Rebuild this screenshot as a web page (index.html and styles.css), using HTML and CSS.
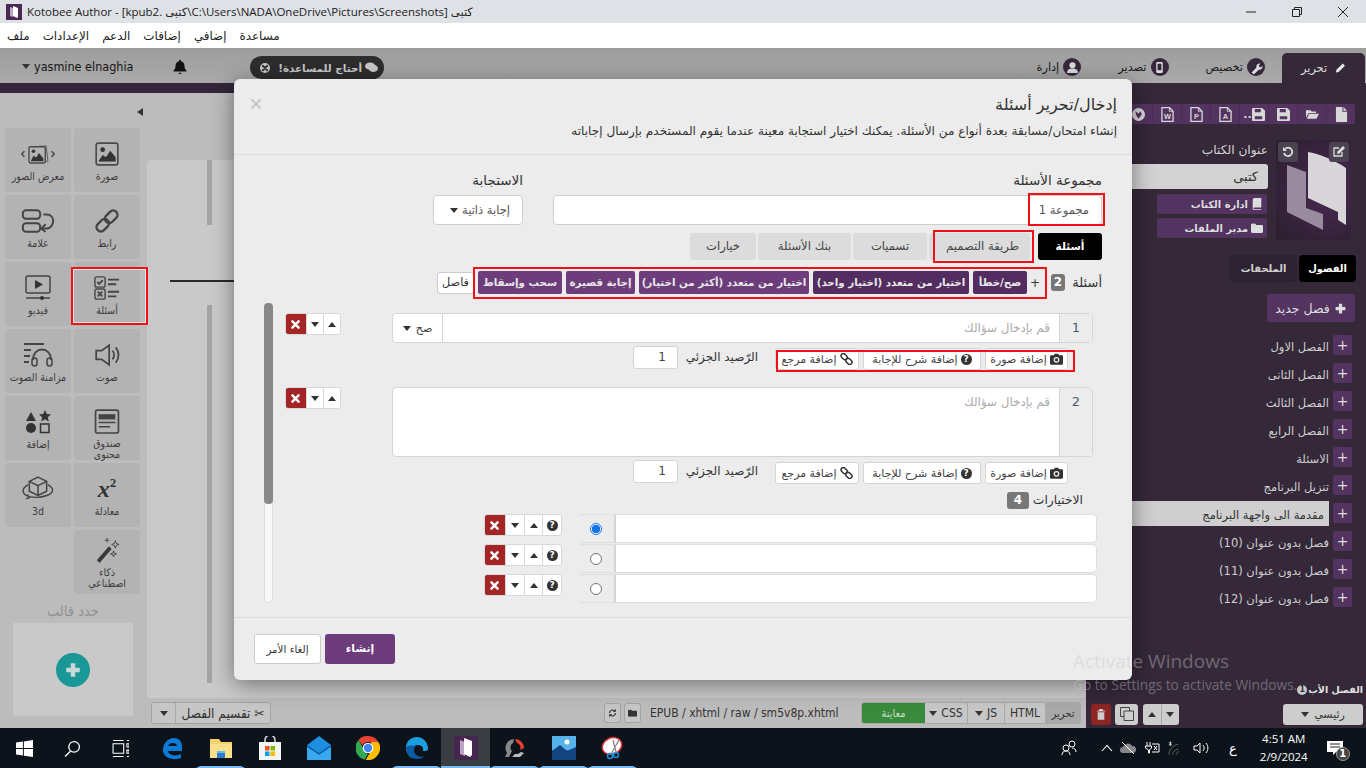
FILE: index.html
```html
<!DOCTYPE html>
<html lang="ar">
<head>
    <meta charset="UTF-8">
    <title>Kotobee Author</title>
    <link rel="stylesheet" href="styles.css">
</head>
<body>

<svg class="defs" width="0" height="0">
    <symbol id="i-x" viewBox="0 0 16 16"><path d="M3.500 3.500l9 9M12.500 3.500l-9 9" stroke="currentColor" stroke-width="3.600" fill="none" stroke-linecap="round"/></symbol>
    <symbol id="i-down" viewBox="0 0 10 6"><path d="M0 0h10L5 6z" fill="currentColor"/></symbol>
    <symbol id="i-up" viewBox="0 0 10 6"><path d="M0 6h10L5 0z" fill="currentColor"/></symbol>
    <symbol id="i-cam" viewBox="0 0 16 14"><path d="M1.500 2.500h3.200L6 .5h4l1.300 2h3.200A1.500 1.500 0 0 1 16 4v8.500a1.500 1.500 0 0 1-1.500 1.500h-13A1.500 1.500 0 0 1 0 12.500V4a1.500 1.500 0 0 1 1.500-1.500z" fill="currentColor"/><circle cx="8" cy="8" r="3.600" fill="#ececec"/><circle cx="8" cy="8" r="2" fill="currentColor"/></symbol>
    <symbol id="i-link" viewBox="0 0 16 16"><g transform="rotate(45 8 8)" fill="none" stroke="currentColor" stroke-width="2"><rect x="-1" y="5" width="9" height="6" rx="3"/><rect x="8" y="5" width="9" height="6" rx="3"/></g></symbol>
    <symbol id="i-plus" viewBox="0 0 16 16"><path d="M8 2v12M2 8h12" stroke="currentColor" stroke-width="4" fill="none"/></symbol>
    <symbol id="i-file" viewBox="0 0 14 16"><path d="M1 0h7v5h5v11H1zM9 0l4 4H9z" fill="currentColor"/></symbol>
    <symbol id="i-open" viewBox="0 0 18 14"><path d="M0 1h6l2 2h6v2H4L0 11zM4.500 6H18l-3.500 7H1z" fill="currentColor"/></symbol>
    <symbol id="i-save" viewBox="0 0 14 14"><path d="M0 1a1 1 0 0 1 1-1h10l3 3v10a1 1 0 0 1-1 1H1a1 1 0 0 1-1-1zM3 1v3.500h6.500V1zM3 9v3h8V9z" fill="currentColor" fill-rule="evenodd"/></symbol>
    <symbol id="i-doc" viewBox="0 0 14 16"><path d="M1 .5h8l4 4v11H1z" fill="none" stroke="currentColor" stroke-width="1.400"/><path d="M9 .5v4h4" fill="none" stroke="currentColor"/></symbol>
    <symbol id="i-folder" viewBox="0 0 16 13"><path d="M0 2A1.500 1.500 0 0 1 1.500.5h4L7 2.500h7.500A1.500 1.500 0 0 1 16 4v7.500a1.500 1.500 0 0 1-1.500 1.500h-13A1.500 1.500 0 0 1 0 11.500z" fill="currentColor"/></symbol>
</svg>

<div class="titlebar">
    <svg class="app-logo" viewBox="0 0 16 16"><rect width="16" height="16" fill="#4a2a55"/><path d="M4 3l3 1v9l-3-1z" fill="#b9a6c0"/><path d="M7 2l5 2v9l-1 1-4-2z" fill="#fff"/></svg>
    <span class="title-text">Kotobee Author - [kpub2. كتبى\C:\Users\NADA\OneDrive\Pictures\Screenshots] كتبى</span>
    <div class="win-btns">
        <svg viewBox="0 0 12 12"><path d="M1 6h10" stroke="#222" fill="none"/></svg>
        <svg viewBox="0 0 12 12"><path d="M1.500 3.500h7v7h-7zM3.500 3.500v-2h7v7h-2" stroke="#222" fill="none"/></svg>
        <svg viewBox="0 0 12 12"><path d="M1 1l10 10M11 1L1 11" stroke="#222" fill="none"/></svg>
    </div>
</div>

<div class="menubar">
    <span>ملف</span>
    <span>الإعدادات</span>
    <span>الدعم</span>
    <span>إضافات</span>
    <span>إضافي</span>
    <span>مساعدة</span>
</div>

<div class="topbar">
    <div class="user"><svg class="caret"><use href="#i-down"/></svg>yasmine elnaghia</div>
    <svg class="bell" viewBox="0 0 14 14"><path d="M7 0a1 1 0 0 1 1 1.200c2.500.5 3.500 2.500 3.500 5 0 2.300 1 3.500 2 4.300v1H.5v-1c1-.8 2-2 2-4.300 0-2.500 1-4.500 3.500-5A1 1 0 0 1 7 0zM5.500 12.800h3a1.500 1.200 0 0 1-3 0z" fill="#111"/></svg>
    <div class="help-chip" dir="rtl">
        <svg viewBox="0 0 14 12"><ellipse cx="5.500" cy="4.500" rx="5.500" ry="4" fill="#c9c9c9"/><ellipse cx="9" cy="7" rx="5" ry="4" fill="#c9c9c9"/></svg>
        <span>أحتاج للمساعدة!</span>
        <span class="chip-x"><svg><use href="#i-x"/></svg></span>
    </div>
    <div class="nav" dir="rtl">
        <div class="nav-tab">
            <svg viewBox="0 0 12 12"><path d="M1 11l.6-3L8.500 1.100l2.400 2.400L4 10.400z" fill="#e6e6e6"/></svg>
            <span>تحرير</span>
        </div>
        <div class="nav-item n1">
            <span class="nav-ic"><svg viewBox="0 0 12 12"><path d="M1.500 10.500L6 6c-.6-2 1-4 3.600-3.500L8 4.200l.6 1.200 1.200.6 1.700-1.600C12 7 10 8.500 8 8l-4.500 4.500z" fill="#ddd"/></svg></span>
            <span>تخصيص</span>
        </div>
        <div class="nav-item n2">
            <span class="nav-ic"><svg viewBox="0 0 12 12"><rect x="3" y="1" width="6" height="10" rx="1" fill="#ddd"/><rect x="4.200" y="2.500" width="3.600" height="6" fill="#35283a"/></svg></span>
            <span>تصدير</span>
        </div>
        <div class="nav-item n3">
            <span class="nav-ic"><svg viewBox="0 0 12 12"><circle cx="6" cy="4" r="2.800" fill="#ddd"/><path d="M1 11c0-3 2-4 5-4s5 1 5 4z" fill="#ddd"/></svg></span>
            <span>إدارة</span>
        </div>
    </div>
</div>

<div class="main">
    <div class="workspace">
        <aside class="sidebar" dir="rtl">
            <svg class="collapse" viewBox="0 0 6 8"><path d="M6 0v8L0 4z" fill="#333"/></svg>
            <div class="tools">
                <div class="tool">
                    <svg viewBox="0 0 24 24"><rect x="2" y="2" width="20" height="20" rx="2" fill="none" stroke="#4a4a4a" stroke-width="1.500"/><circle cx="8" cy="8" r="2.200" fill="#333"/><path d="M4 19l4-6 3 2 4-6 5 6v4z" fill="#333"/></svg>
                    <span>صورة</span>
                </div>
                <div class="tool">
                    <svg class="wide" viewBox="0 0 42 24"><path d="M6 9l-3 3 3 3M36 9l3 3-3 3" fill="none" stroke="#444" stroke-width="1.500"/><path d="M16 4l14-1 2 17-3 .5" fill="none" stroke="#555"/><rect x="11" y="4" width="18" height="18" rx="2" fill="none" stroke="#4a4a4a" stroke-width="1.500"/><circle cx="16" cy="9" r="2" fill="#333"/><path d="M13 20l3-6 3 2 3-5 5 6v3z" fill="#333"/></svg>
                    <span>معرض الصور</span>
                </div>
                <div class="tool">
                    <svg viewBox="0 0 24 24"><g transform="rotate(-45 12 12)" fill="none" stroke="#444" stroke-width="2.200"><rect x="0" y="8" width="13" height="8" rx="4"/><rect x="11" y="8" width="13" height="8" rx="4"/></g></svg>
                    <span>رابط</span>
                </div>
                <div class="tool">
                    <svg class="wide" viewBox="0 0 30 24"><g fill="none" stroke="#444" stroke-width="1.800"><rect x="1" y="2" width="16" height="8" rx="3"/><rect x="1" y="14" width="16" height="8" rx="3"/><path d="M20 6h3c4 0 6 3 6 6s-2 7-7 7h-3"/><path d="M22 15l-4 4 4 3"/></g></svg>
                    <span>علامة</span>
                </div>
                <div class="tool">
                    <svg viewBox="0 0 28 26"><g fill="none" stroke="#444" stroke-width="1.500"><rect x="1" y="1" width="11" height="11" rx="2"/><rect x="1" y="14" width="11" height="11" rx="2"/><path d="M3.500 6.500l2 2 4-4" stroke-width="2"/><path d="M4 17l5 5M9 17l-5 5" stroke-width="1.800"/><path d="M15 4h12M15 9h9M15 17h12M15 22h9" stroke-width="2"/></g></svg>
                    <span>أسئلة</span>
                </div>
                <div class="tool">
                    <svg viewBox="0 0 26 26"><rect x="1" y="1" width="24" height="17" rx="2" fill="none" stroke="#444" stroke-width="1.500"/><path d="M10 5l8 4.500-8 4.500z" fill="#333"/><path d="M1 23h24" stroke="#444" stroke-width="1.500"/><circle cx="17" cy="23" r="2" fill="#333"/></svg>
                    <span>فيديو</span>
                </div>
                <div class="tool">
                    <svg viewBox="0 0 24 24"><path d="M2 8h5l7-5v18l-7-5H2z" fill="none" stroke="#444" stroke-width="1.600"/><path d="M17 8c2 2 2 6 0 8M20 5c3.500 4 3.500 10 0 14" fill="none" stroke="#444" stroke-width="1.600"/></svg>
                    <span>صوت</span>
                </div>
                <div class="tool">
                    <svg class="wide" viewBox="0 0 32 26"><path d="M2 2h20M2 8h7M2 14h6M2 20h5" stroke="#444" stroke-width="2" fill="none"/><path d="M11 18c0-14 18-14 18 0" fill="none" stroke="#444" stroke-width="1.800"/><rect x="10" y="16" width="5" height="8" rx="2.500" fill="none" stroke="#444" stroke-width="1.500"/><rect x="25" y="16" width="5" height="8" rx="2.500" fill="none" stroke="#444" stroke-width="1.500"/></svg>
                    <span>مزامنة الصوت</span>
                </div>
                <div class="tool">
                    <svg viewBox="0 0 24 24"><rect x="1" y="1" width="22" height="22" rx="2" fill="none" stroke="#444" stroke-width="1.600"/><rect x="4" y="5" width="16" height="5" fill="#444"/><path d="M4 13h16M4 17h11" stroke="#444" stroke-width="1.400"/></svg>
                    <span>صندوق<br>محتوى</span>
                </div>
                <div class="tool">
                    <svg viewBox="0 0 26 24"><path d="M1 11L6 2l5 9z" fill="#333"/><path d="M20 0l1.800 4 4.200.4-3.200 2.900 1 4.200-3.800-2.300-3.800 2.300 1-4.200L14 4.400l4.200-.4z" fill="#333"/><circle cx="6" cy="18" r="5" fill="#333"/><rect x="15.500" y="14" width="8.500" height="8.500" fill="none" stroke="#333" stroke-width="1.500"/></svg>
                    <span>إضافة</span>
                </div>
                <div class="tool">
                    <div class="eq" dir="ltr"><i>x</i><sup>2</sup></div>
                    <span>معادلة</span>
                </div>
                <div class="tool">
                    <svg class="wide" viewBox="0 0 30 24"><path d="M15 1l8 4v9l-8 4-8-4V5zM7 5l8 4 8-4M15 9v9" fill="none" stroke="#444" stroke-width="1.400"/><path d="M6 8c-7 4-6 9 1 11 5 1 11 1 16-1 7-2 7-7 1-10M5 17l2 3-3 1" fill="none" stroke="#444" stroke-width="1.300"/></svg>
                    <span>3d</span>
                </div>
                <div class="tool ai">
                    <svg viewBox="0 0 26 28"><path d="M2 25L15 10l3 3L5 28z" fill="#3a3a3a"/><path d="M13 1v5M10.500 3.500h5M22 4l1 3 3 1-3 1-1 3-1-3-3-1 3-1zM20 15l.8 2.400 2.400.8-2.400.8-.8 2.400-.8-2.400-2.400-.8 2.400-.8z" fill="none" stroke="#444"/></svg>
                    <span>ذكاء<br>اصطناعي</span>
                </div>
            </div>
            <div class="tpl-title">حدد قالب</div>
            <div class="tpl-box"><span class="tpl-add"><svg><use href="#i-plus"/></svg></span></div>
        </aside>

        <div class="center">
            <div class="canvas">
                <div class="bar short"></div>
                <div class="rule"></div>
                <div class="doc">
                    <div class="bar long"></div>
                    <div class="doc-text" dir="rtl">ن<br>ن</div>
                </div>
            </div>
            <div class="bottombar">
                <div class="btn-group split">
                    <span class="bb-btn"><svg class="caret"><use href="#i-down"/></svg></span>
                    <span class="bb-btn split-main" dir="rtl">✂ تقسيم الفصل</span>
                </div>
                <span class="mini-btn first"><svg viewBox="0 0 12 12"><path d="M2 6a4 4 0 0 1 7-2.600M10 6a4 4 0 0 1-7 2.600" fill="none" stroke="#333" stroke-width="1.600"/><path d="M10 1v3H7M2 11V8h3" fill="none" stroke="#333" stroke-width="1.200"/></svg></span>
                <span class="mini-btn"><svg viewBox="0 0 16 13"><use href="#i-folder"/></svg></span>
                <span class="path">EPUB / xhtml / raw / sm5v8p.xhtml</span>
                <div class="btn-group code-tabs">
                    <span class="bb-btn preview">معاينة</span>
                    <span class="bb-btn b-css"><svg class="caret"><use href="#i-down"/></svg>CSS</span>
                    <span class="bb-btn b-js"><svg class="caret"><use href="#i-down"/></svg>JS</span>
                    <span class="bb-btn b-html">HTML</span>
                    <span class="bb-btn b-edit">تحرير</span>
                </div>
            </div>
        </div>
    </div>

    <aside class="panel" dir="rtl">
        <div class="file-tools">
            <span><svg class="t-ic"><use href="#i-file"/></svg></span>
            <span><svg class="t-ic"><use href="#i-open"/></svg></span>
            <span><svg class="t-ic"><use href="#i-save"/></svg></span>
            <span class="save-as"><svg class="t-ic"><use href="#i-save"/></svg>..</span>
            <span><svg class="t-ic" viewBox="0 0 14 16"><use href="#i-doc"/><text x="7" y="13" class="doc-letter">A</text></svg></span>
            <span><svg class="t-ic" viewBox="0 0 14 16"><use href="#i-doc"/><text x="7" y="13" class="doc-letter">P</text></svg></span>
            <span><svg class="t-ic" viewBox="0 0 14 16"><use href="#i-doc"/><text x="7" y="13" class="doc-letter">W</text></svg></span>
            <span><svg viewBox="0 0 12 12" class="t-ic"><circle cx="6" cy="6" r="6" fill="#d8d8d8"/><path d="M3 3l3 2 2-2 1 3-3 4-2-3z" fill="#533360"/></svg></span>
        </div>
        <div class="book">
            <div class="cover">
                <svg viewBox="0 0 75 100"><path d="M11 25l19 7v36l17 6v16L11 72z" fill="#9a8a9e"/><path d="M32 12c10 1 28 9 38 16v57l-8-5v-8L32 58z" fill="#d8d6d8"/></svg>
                <span class="cov-btn undo"><svg viewBox="0 0 12 12"><path d="M3 3a4.200 4.200 0 1 1-1 4" fill="none" stroke="#ddd" stroke-width="1.800"/><path d="M1 1v4h4z" fill="#ddd"/></svg></span>
                <span class="cov-btn edit"><svg viewBox="0 0 12 12"><path d="M9 6v4H1V2h5" fill="none" stroke="#ddd" stroke-width="1.300"/><path d="M4 8l.5-2.500L10 0l2 2-5.500 5.500z" fill="#ddd"/></svg></span>
            </div>
            <div class="book-info">
                <div class="book-label">عنوان الكتاب</div>
                <div class="book-name">كتبى</div>
                <div class="book-btn"><svg viewBox="0 0 12 14"><path d="M1 2a2 2 0 0 1 2-2h8v11H3a1 1 0 0 0 0 2h8v1H2.500A1.500 1.500 0 0 1 1 12.500z" fill="#ddd"/></svg>ادارة الكتاب</div>
                <div class="book-btn"><svg viewBox="0 0 16 13"><use href="#i-folder"/></svg>مدير الملفات</div>
            </div>
        </div>
        <div class="ch-tabs">
            <span class="active">الفصول</span>
            <span>الملحقات</span>
        </div>
        <div class="new-chapter"><svg><use href="#i-plus"/></svg>فصل جديد</div>
        <ul class="chapters">
            <li><span class="ch-add">+</span><span class="ch-name">الفصل الاول</span></li>
            <li><span class="ch-add">+</span><span class="ch-name">الفصل الثانى</span></li>
            <li><span class="ch-add">+</span><span class="ch-name">الفصل الثالث</span></li>
            <li><span class="ch-add">+</span><span class="ch-name">الفصل الرابع</span></li>
            <li><span class="ch-add">+</span><span class="ch-name">الاسئلة</span></li>
            <li><span class="ch-add">+</span><span class="ch-name">تنزيل البرنامج</span></li>
            <li class="selected"><span class="ch-add">+</span><span class="ch-name">مقدمة الى واجهة البرنامج</span></li>
            <li><span class="ch-add">+</span><span class="ch-name">فصل بدون عنوان (10)</span></li>
            <li><span class="ch-add">+</span><span class="ch-name">فصل بدون عنوان (11)</span></li>
            <li><span class="ch-add">+</span><span class="ch-name">فصل بدون عنوان (12)</span></li>
        </ul>
        <div class="parent-label">الفصل الأب <span class="info">1</span></div>
        <div class="panel-foot">
            <span class="parent-select">رئيسي <svg class="caret"><use href="#i-down"/></svg></span>
            <div class="arrows">
                <span><svg class="caret"><use href="#i-down"/></svg></span>
                <span><svg class="caret"><use href="#i-up"/></svg></span>
            </div>
            <span class="copy-btn"><svg viewBox="0 0 14 14"><path d="M.5.5h9v9h-9z" fill="none" stroke="#444"/><path d="M4 4h9.500v9.500H4z" fill="#cfcfcf" stroke="#444"/></svg></span>
            <span class="trash-btn"><svg viewBox="0 0 12 14"><path d="M1 3h10v1H1zM4 1h4l1 2H3zM2 5h8v9H2z" fill="#ccc"/></svg></span>
        </div>
    </aside>
</div>

<div class="taskbar">
    <div class="tb-left">
        <span class="tb-item"><svg viewBox="0 0 16 16"><path d="M0 2.300L6.500 1.400v6.200H0zM7.400 1.300L16 0v7.600H7.400zM0 8.400h6.500v6.200L0 13.700zM7.400 8.400H16V16l-8.600-1.200z" fill="#fff"/></svg></span>
        <span class="tb-item"><svg viewBox="0 0 16 16"><circle cx="9.500" cy="6.500" r="5" fill="none" stroke="#fff" stroke-width="1.200"/><path d="M6 10.500L1 15.500" stroke="#fff" stroke-width="1.300"/></svg></span>
        <span class="tb-item tv"><svg viewBox="0 0 16 16"><path d="M1 .5h10M1 15.500h10M1 3.500h10v9H1zM14 .5h2M14 3.500h2v3h-2zM14 9.500h2v3h-2zM14 15.500h2" fill="none" stroke="#fff"/></svg></span>
        <span class="tb-item app"><svg viewBox="0 0 24 24"><path d="M22 15H8c.5 4 7 6 13 3v4c-8 3-19 0-18-9C3.500 5 12 0 18 3c3 1.500 4.500 5 4 12zM8 10h9c0-4-8-4-9 0z" fill="#0c7bd8"/></svg></span>
        <span class="tb-item app on"><svg viewBox="0 0 24 24"><path d="M1 3h9l2 3h11v4H1z" fill="#f6d36b"/><path d="M1 8h22v14H1z" fill="#fbe08a"/><path d="M8 15h8v7H8z" fill="#2e7dd1"/><path d="M8 15h8v2H8z" fill="#67b7ea"/></svg></span>
        <span class="tb-item app"><svg viewBox="0 0 24 24"><path d="M7 6V4a5 5 0 0 1 10 0v2" fill="none" stroke="#ddd" stroke-width="1.500"/><rect x="1" y="6" width="22" height="18" fill="#f5f5f5"/><rect x="7" y="10" width="4.500" height="4.500" fill="#f25022"/><rect x="12.500" y="10" width="4.500" height="4.500" fill="#7fba00"/><rect x="7" y="15.500" width="4.500" height="4.500" fill="#00a4ef"/><rect x="12.500" y="15.500" width="4.500" height="4.500" fill="#ffb900"/></svg></span>
        <span class="tb-item app"><svg viewBox="0 0 24 24"><path d="M0 9l12-9 12 9v15H0z" fill="#1e8fdf"/><path d="M0 9l12 8 12-8v2L12 19 0 11z" fill="#0a5fa8"/><path d="M0 11l12 8 12-8v13H0z" fill="#39a9ee"/></svg></span>
        <span class="tb-item app"><svg viewBox="0 0 24 24"><path d="M12 0a12 12 0 0 1 10.400 6H12a6 6 0 0 0-5.400 3.500L2.500 4A12 12 0 0 1 12 0z" fill="#ea4335"/><path d="M2.500 4l5.500 9.500a5 5 0 0 0 4 4.500l-3.400 5.700A12 12 0 0 1 2.500 4z" fill="#34a853"/><path d="M22.400 6A12 12 0 0 1 9.700 23.800L15 15a6 6 0 0 0 1.500-5l-2-4z" fill="#fbbc05"/><circle cx="12" cy="12" r="5.300" fill="#fff"/><circle cx="12" cy="12" r="4.200" fill="#4285f4"/></svg></span>
        <span class="tb-item app on"><svg viewBox="0 0 24 24"><path d="M23 13C23 5 17 1 12 1 5 1 1 6 1 12c0 5 3 9 7 10.500C4 18 5 10 12 9c4-.5 7 2 6 6 2 0 5 0 5-2z" fill="#1b9de2"/><path d="M1 12c0 7 6 11 11 11 3 0 6-1 8-3-5 2-11-.5-11-6 0-2 1-3 2-4C7 9 2 9 1 12z" fill="#0c59a4"/></svg></span>
        <span class="tb-item app active on"><svg viewBox="0 0 24 24"><rect width="24" height="24" fill="#452650"/><path d="M6 4l5 2v14l-5-2z" fill="#b9a6c0"/><path d="M10 2l8 3v14l-2 2-6-3z" fill="#fff"/></svg></span>
        <span class="tb-item app on"><svg viewBox="0 0 24 24"><path d="M12 3a9 9 0 0 1 9 9l-4 2a5 5 0 0 0-3-7z" fill="#e5452c"/><path d="M11 3a9 9 0 0 0-7 14l-2 4h4l3-6a5 5 0 0 1 1-8z" fill="#888"/><path d="M9 21h8l4-4-3-1-3 2h-3z" fill="#bbb"/></svg></span>
        <span class="tb-item app on"><svg viewBox="0 0 24 24"><rect width="24" height="24" fill="#2b78c5"/><rect width="24" height="14" fill="#55b2ea"/><path d="M0 24V15l8-6 7 6 9-4v13z" fill="#12457f"/><circle cx="15" cy="6" r="2.500" fill="#fff"/></svg></span>
        <span class="tb-item app on"><svg viewBox="0 0 24 24"><ellipse cx="11" cy="10" rx="10" ry="8" fill="#fff" stroke="#d33" stroke-width="1.500" transform="rotate(-25 11 10)"/><path d="M12 4l3 12M18 4L10 18" stroke="#888" stroke-width="1.300"/><circle cx="15" cy="19" r="2.500" fill="none" stroke="#1b8fd8" stroke-width="1.500"/><circle cx="9" cy="20" r="2.500" fill="none" stroke="#1b8fd8" stroke-width="1.500"/></svg></span>
    </div>
    <div class="tray">
        <svg class="t-people" viewBox="0 0 16 16"><circle cx="5" cy="8" r="3" fill="none" stroke="#fff"/><path d="M1 15c0-3 2-4 4-4s4 1 4 4" fill="none" stroke="#fff"/><circle cx="11" cy="4" r="3" fill="none" stroke="#fff"/><path d="M11 8c2 0 4 1 4 4" fill="none" stroke="#fff"/></svg>
        <svg class="t-chev" viewBox="0 0 12 8"><path d="M1 7l5-5.500L11 7" fill="none" stroke="#fff" stroke-width="1.100"/></svg>
        <svg class="t-cloud" viewBox="0 0 16 14"><path d="M3 12a3 3 0 0 1 0-6 5 5 0 0 1 9-1 3.500 3.500 0 0 1 1 7z" fill="#888"/><path d="M2 1l12 12" stroke="#fff"/></svg>
        <svg class="t-power" viewBox="0 0 16 14"><path d="M3 1v4M6 1v4M1.500 5h6v2l-2 2v3h-1V9l-3-2zM8 3h7v8H8" fill="none" stroke="#fff"/><path d="M10 5l3 4M13 5l-3 4" stroke="#fff"/></svg>
        <svg class="t-wifi" viewBox="0 0 16 14"><path d="M1 14C1 9 5 4 11 3M5 14c0-3 2-5 6-6M9 14c0-2 1-3 3-3" fill="none" stroke="#666"/><path d="M1 1l3 3M4 1L1 4M2.500 0v5" stroke="#fff" stroke-width=".8"/></svg>
        <svg class="t-vol" viewBox="0 0 16 14"><path d="M1 5h3l3-3v10L4 9H1z" fill="none" stroke="#fff"/><path d="M10 4c1.500 2 1.500 4 0 6M13 2c2.500 3 2.500 7 0 10" fill="none" stroke="#fff"/></svg>
        <span class="t-lang">ع</span>
        <div class="clock"><div>4:51 AM</div><div>2/9/2024</div></div>
        <span class="t-note"><svg viewBox="0 0 16 14"><path d="M0 0h16v11H9l-3 3v-3H0z" fill="#fff"/><path d="M3 3h10M3 6h10" stroke="#222"/></svg><b>1</b></span>
    </div>
</div>

<div class="modal" dir="rtl">
    <div class="modal-head">
        <span class="modal-close">×</span>
        <h2>إدخال/تحرير أسئلة</h2>
        <p>إنشاء امتحان/مسابقة بعدة أنواع من الأسئلة. يمكنك اختيار استجابة معينة عندما يقوم المستخدم بإرسال إجاباته</p>
    </div>
    <div class="modal-body">
        <div class="form-row">
            <div class="field group-field">
                <label>مجموعة الأسئلة</label>
                <div class="text-input">مجموعة 1</div>
            </div>
            <div class="field resp-field">
                <label>الاستجابة</label>
                <div class="text-input select-input">إجابة ذاتية <svg class="caret"><use href="#i-down"/></svg></div>
            </div>
        </div>
        <div class="tabs">
            <span class="tab active t1">أسئلة</span>
            <span class="tab t2">طريقة التصميم</span>
            <span class="tab t3">تسميات</span>
            <span class="tab t4">بنك الأسئلة</span>
            <span class="tab t5">خيارات</span>
        </div>
        <div class="q-toolbar">
            <span class="q-label">أسئلة</span>
            <span class="badge">2</span>
            <span class="q-plus">| +</span>
            <span class="q-btn dark w54">صح/خطأ</span>
            <span class="q-btn dark w156">اختيار من متعدد (اختيار واحد)</span>
            <span class="q-btn w170">اختيار من متعدد (أكثر من اختيار)</span>
            <span class="q-btn w69">إجابة قصيرة</span>
            <span class="q-btn w84">سحب وإسقاط</span>
            <span class="q-sep">فاصل</span>
        </div>

        <div class="scroll-area">
            <div class="scroll-list">
                <div class="question">
                    <div class="q-main">
                        <div class="q-input">
                            <span class="q-num">1</span>
                            <span class="q-text">قم بإدخال سؤالك</span>
                            <span class="q-type">صح <svg class="caret"><use href="#i-down"/></svg></span>
                        </div>
                        <div class="q-extra">
                            <span class="add-btn a1"><svg><use href="#i-cam"/></svg>إضافة صورة</span>
                            <span class="add-btn a2"><span class="qm">?</span>إضافة شرح للإجابة</span>
                            <span class="add-btn a3"><svg><use href="#i-link"/></svg>إضافة مرجع</span>
                            <span class="score-label">الرّصيد الجزئي</span>
                            <span class="score">1</span>
                        </div>
                    </div>
                    <div class="row-ctrl">
                        <span><svg class="caret"><use href="#i-up"/></svg></span>
                        <span><svg class="caret"><use href="#i-down"/></svg></span>
                        <span class="del"><svg><use href="#i-x"/></svg></span>
                    </div>
                </div>

                <div class="question q2">
                    <div class="q-main">
                        <div class="q-input tall">
                            <span class="q-num">2</span>
                            <span class="q-text">قم بإدخال سؤالك</span>
                        </div>
                        <div class="q-extra">
                            <span class="add-btn a1"><svg><use href="#i-cam"/></svg>إضافة صورة</span>
                            <span class="add-btn a2"><span class="qm">?</span>إضافة شرح للإجابة</span>
                            <span class="add-btn a3"><svg><use href="#i-link"/></svg>إضافة مرجع</span>
                            <span class="score-label">الرّصيد الجزئي</span>
                            <span class="score">1</span>
                        </div>
                    </div>
                    <div class="row-ctrl">
                        <span><svg class="caret"><use href="#i-up"/></svg></span>
                        <span><svg class="caret"><use href="#i-down"/></svg></span>
                        <span class="del"><svg><use href="#i-x"/></svg></span>
                    </div>
                </div>

                <div class="choices-head">الاختيارات <span class="badge">4</span></div>

                <div class="choice">
                    <div class="choice-box"><span class="choice-input"></span><span class="radio on"></span></div>
                    <div class="row-ctrl wide">
                        <span><span class="qm">?</span></span>
                        <span><svg class="caret"><use href="#i-up"/></svg></span>
                        <span><svg class="caret"><use href="#i-down"/></svg></span>
                        <span class="del"><svg><use href="#i-x"/></svg></span>
                    </div>
                </div>
                <div class="choice">
                    <div class="choice-box"><span class="choice-input"></span><span class="radio"></span></div>
                    <div class="row-ctrl wide">
                        <span><span class="qm">?</span></span>
                        <span><svg class="caret"><use href="#i-up"/></svg></span>
                        <span><svg class="caret"><use href="#i-down"/></svg></span>
                        <span class="del"><svg><use href="#i-x"/></svg></span>
                    </div>
                </div>
                <div class="choice">
                    <div class="choice-box"><span class="choice-input"></span><span class="radio"></span></div>
                    <div class="row-ctrl wide">
                        <span><span class="qm">?</span></span>
                        <span><svg class="caret"><use href="#i-up"/></svg></span>
                        <span><svg class="caret"><use href="#i-down"/></svg></span>
                        <span class="del"><svg><use href="#i-x"/></svg></span>
                    </div>
                </div>
            </div>
            <div class="scrollbar"><div class="thumb"></div></div>
        </div>
    </div>
    <div class="modal-foot">
        <span class="btn-create">إنشاء</span>
        <span class="btn-cancel">إلغاء الأمر</span>
    </div>
</div>

<!-- red boxes drawn on top of the screenshot -->
<div class="mark m-tool"></div>
<div class="mark m-group"></div>
<div class="mark m-tab"></div>
<div class="mark m-types"></div>
<div class="mark m-add"></div>

<div class="activate">
    <div>Activate Windows</div>
    <div class="small">Go to Settings to activate Windows.</div>
</div>

</body>
</html>
```

FILE: styles.css
```css
html, body {
    margin: 0;
    padding: 0;
}
body {
    position: relative;
    width: 1366px;
    height: 768px;
    overflow: hidden;
    font-family: "DejaVu Sans", sans-serif;
    font-size: 11px;
    color: #333;
    background: #352839;
}
.defs {
    position: absolute;
}
svg {
    display: block;
}
.caret {
    display: inline-block;
    flex: none;
    width: 8px;
    height: 5px;
    color: #333;
}

/* window chrome */
.titlebar {
    height: 23px;
    background: #dee1e6;
    display: flex;
    align-items: center;
    padding-left: 6px;
    font-family: "Open Sans", "DejaVu Sans", sans-serif;
    font-size: 11.5px;
    color: #222;
}
.app-logo {
    width: 16px;
    height: 16px;
    margin-right: 5px;
}
.win-btns {
    margin-left: auto;
    display: flex;
    padding-right: 17px;
    gap: 34px;
}
.win-btns svg {
    width: 12px;
    height: 12px;
}
.menubar {
    height: 25px;
    background: #fff;
    display: flex;
    align-items: center;
    gap: 13px;
    padding-left: 7px;
    font-size: 11.9px;
    color: #222;
}

.topbar {
    height: 35px;
    background: linear-gradient(#9d9d9d, #aaaaaa);
    display: flex;
    align-items: flex-start;
}
.user {
    margin: 11px 0 0 22px;
    width: 111px;
    display: flex;
    align-items: center;
    gap: 4px;
    font-family: "DejaVu Sans Condensed", sans-serif;
    font-size: 12.5px;
    color: #151515;
    white-space: nowrap;
}
.bell {
    width: 14px;
    height: 14px;
    margin: 12px 0 0 40px;
}
.help-chip {
    margin: 8px 0 0 63px;
    width: 134px;
    height: 23px;
    box-sizing: border-box;
    padding: 0 6px 0 10px;
    border-radius: 12px;
    background: #2d2d2d;
    color: #c9c9c9;
    font-weight: bold;
    font-size: 10.4px;
    display: flex;
    align-items: center;
    gap: 3px;
    white-space: nowrap;
}
.help-chip svg {
    width: 13px;
    height: 11px;
}
.chip-x {
    width: 8px;
    height: 8px;
    padding: 1px;
    border-radius: 50%;
    background: #c9c9c9;
    color: #2d2d2d;
    margin-right: auto;
    display: flex;
}
.chip-x svg {
    width: 8px;
    height: 8px;
}
.nav {
    margin-left: auto;
    display: flex;
    align-items: flex-start;
    padding-right: 1px;
    color: #1a1a1a;
    font-size: 11.3px;
}
.nav-tab {
    width: 83px;
    height: 30px;
    margin-top: 5px;
    box-sizing: border-box;
    padding: 0 19px;
    background: #352839;
    border-radius: 5px 5px 0 0;
    color: #ddd;
    display: flex;
    align-items: center;
    gap: 8px;
}
.nav-tab svg {
    width: 12px;
    height: 12px;
}
.nav-item {
    display: flex;
    align-items: center;
    gap: 4px;
    margin-top: 10px;
}
.n1 {
    margin-right: 17px;
}
.n2 {
    margin-right: 37px;
}
.n3 {
    margin-right: 37px;
}
.nav-ic {
    width: 18px;
    height: 18px;
    border-radius: 50%;
    background: #35283a;
    display: flex;
    align-items: center;
    justify-content: center;
}
.nav-ic svg {
    width: 13px;
    height: 13px;
}

/* main area */
.main {
    display: flex;
    height: 645px;
    background: #33263a;
}
.workspace {
    width: 1086px;
    margin-top: 10px;
    display: flex;
    background: #bcbcbc;
    border-radius: 4px 0 0 0;
}
.sidebar {
    position: relative;
    width: 147px;
    box-sizing: border-box;
    padding: 35px 7px 0 0;
    background: #bcbcbc;
    font-family: "DejaVu Sans Condensed", sans-serif;
}
.collapse {
    position: absolute;
    right: 4px;
    top: 15px;
    width: 6px;
    height: 8px;
}
.tools {
    display: grid;
    grid-template-columns: 66px 66px;
    grid-auto-rows: 64px;
    gap: 3px;
}
.tool {
    background: #b3b3b3;
    border-radius: 3px;
    box-sizing: border-box;
    padding-top: 13px;
    display: flex;
    flex-direction: column;
    align-items: center;
    text-align: center;
    line-height: 11px;
    font-size: 10.5px;
    color: #3c3c3c;
}
.tool svg {
    width: 26px;
    height: 26px;
    margin-bottom: 4px;
}
.tool svg.wide {
    width: 38px;
}
.tool.ai {
    padding-top: 7px;
}
.eq {
    height: 26px;
    margin-bottom: 4px;
    font-family: "Liberation Serif", serif;
    font-weight: bold;
    font-size: 24px;
    line-height: 26px;
    color: #333;
    display: flex;
}
.eq sup {
    font-size: 13px;
    line-height: 13px;
}
.tpl-title {
    margin: 10px 7px 0 0;
    width: 120px;
    text-align: center;
    font-size: 14.5px;
    line-height: 15px;
    color: #919191;
}
.tpl-box {
    width: 120px;
    height: 93px;
    margin: 4px 7px 0 0;
    background: #c9c9c9;
    display: flex;
    align-items: center;
    justify-content: center;
}
.tpl-add {
    width: 34px;
    height: 34px;
    border-radius: 50%;
    background: #1a9797;
    color: #c9d9d9;
    display: flex;
    align-items: center;
    justify-content: center;
}
.tpl-add svg {
    width: 18px;
    height: 18px;
}

.center {
    flex: 1;
    display: flex;
    flex-direction: column;
    padding-top: 67px;
    min-width: 0;
}
.canvas {
    flex: 1;
    background: #c9c9c9;
    border-radius: 4px;
    padding-left: 23px;
    overflow: hidden;
}
.bar {
    width: 5px;
    background: #a4a4a4;
}
.bar.short {
    height: 65px;
    margin-left: 37px;
}
.bar.long {
    height: 378px;
}
.rule {
    margin-top: 55px;
    width: 200px;
    height: 2px;
    background: #2a2a2a;
}
.doc {
    display: flex;
    margin: 23px 0 0 37px;
}
.doc-text {
    width: 60px;
    margin: 36px 0 0 12px;
    font-size: 26px;
    line-height: 30px;
    color: #222;
}
.bottombar {
    height: 30px;
    display: flex;
    align-items: center;
    padding-left: 4px;
    color: #333;
    font-family: "DejaVu Sans Condensed", sans-serif;
}
.btn-group {
    display: flex;
    height: 22px;
    border: 1px solid #a3a3a3;
    border-radius: 3px;
    box-sizing: border-box;
    overflow: hidden;
    background: #c6c6c6;
}
.split {
    width: 120px;
}
.bb-btn {
    display: flex;
    align-items: center;
    justify-content: center;
    gap: 4px;
    border-right: 1px solid #a9a9a9;
    box-sizing: border-box;
}
.split .bb-btn:first-child {
    width: 24px;
}
.split-main {
    flex: 1;
    font-size: 13.5px;
    border-right: none;
    white-space: nowrap;
}
.mini-btn {
    width: 17px;
    height: 20px;
    margin-left: 3px;
    box-sizing: border-box;
    padding: 4px 3px;
    border: 1px solid #a3a3a3;
    border-radius: 3px;
    background: #c6c6c6;
    color: #333;
}
.mini-btn.first {
    margin-left: 333px;
}
.mini-btn svg {
    width: 9px;
    height: 10px;
}
.path {
    margin-left: 9px;
    width: 211px;
    font-size: 12px;
    color: #333;
    white-space: nowrap;
}
.code-tabs {
    width: 220px;
    border-color: #a8a8a8;
}
.preview {
    width: 63px;
    background: #3a8a3c;
    color: #c8dcc8;
    border-right: none;
}
.b-css {
    width: 43px;
    font-size: 12px;
}
.b-js {
    width: 37px;
    font-size: 12px;
}
.b-html {
    width: 41px;
    font-size: 12px;
}
.b-edit {
    flex: 1;
    background: #a9a9a9;
    border-right: none;
}

/* right panel */
.panel {
    width: 280px;
    box-sizing: border-box;
    background: #352839;
    color: #cfcfcf;
    display: flex;
    flex-direction: column;
}
.file-tools {
    display: flex;
    margin: 21px 11px 0 0;
    height: 20px;
    background: #533360;
    border-radius: 2px;
    width: 232px;
}
.file-tools > span {
    width: 29px;
    box-sizing: border-box;
    border-left: 1px solid #46304f;
    display: flex;
    align-items: center;
    justify-content: center;
    color: #d8d8d8;
    font-weight: bold;
}
.t-ic {
    width: 13px;
    height: 15px;
}
.doc-letter {
    font-family: "Liberation Sans", sans-serif;
    font-size: 8px;
    font-weight: bold;
    fill: #d8d8d8;
    text-anchor: middle;
}
.book {
    display: flex;
    margin: 16px 15px 0 0;
    gap: 8px;
}
.cover {
    position: relative;
    width: 75px;
    height: 100px;
    background: radial-gradient(circle at 70% 50%, #4a2a52, #2a1e2e);
    border-radius: 3px;
}
.cover > svg {
    width: 75px;
    height: 100px;
}
.cov-btn {
    position: absolute;
    top: 2px;
    width: 20px;
    height: 20px;
    background: #4a4250;
    border-radius: 3px;
    display: flex;
    align-items: center;
    justify-content: center;
}
.cov-btn svg {
    width: 12px;
    height: 12px;
}
.undo {
    left: 2px;
}
.edit {
    left: 53px;
}
.book-info {
    flex: 1;
}
.book-label {
    font-size: 12.2px;
    line-height: 15px;
    margin-top: 3px;
    color: #d6d6d6;
}
.book-name {
    height: 25px;
    line-height: 25px;
    margin-top: 6px;
    padding-right: 10px;
    background: #d2d2d2;
    color: #333;
    border-radius: 0 3px 3px 0;
    font-size: 13px;
}
.book-btn {
    width: 110px;
    height: 20px;
    margin-top: 4px;
    margin-right: 1px;
    box-sizing: border-box;
    padding-right: 4px;
    background: #533360;
    border-radius: 2px;
    display: flex;
    align-items: center;
    gap: 3px;
    font-weight: bold;
    font-size: 9.9px;
    color: #ddd;
}
.book-name + .book-btn {
    margin-top: 5px;
}
.book-btn svg {
    width: 12px;
    height: 12px;
    color: #ddd;
}
.ch-tabs {
    display: flex;
    gap: 2px;
    margin: 15px 10px 0 0;
}
.ch-tabs span {
    height: 27px;
    width: 67px;
    line-height: 27px;
    text-align: center;
    background: #2d2231;
    border-radius: 4px;
    font-weight: bold;
    font-size: 9.9px;
    color: #cfcfcf;
}
.ch-tabs .active {
    width: 57px;
    background: #000;
    color: #fff;
}
.new-chapter {
    width: 88px;
    height: 28px;
    margin: 12px 11px 0 0;
    background: #533360;
    border-radius: 2px;
    display: flex;
    align-items: center;
    justify-content: center;
    gap: 4px;
    color: #dedede;
    font-size: 12.5px;
    white-space: nowrap;
}
.new-chapter svg {
    width: 13px;
    height: 13px;
    flex: none;
}
.chapters {
    list-style: none;
    margin: 13px 0 0;
    padding: 0;
}
.chapters li {
    height: 20px;
    margin-bottom: 8px;
    padding-right: 14px;
    display: flex;
    align-items: center;
    gap: 4px;
    font-size: 11.5px;
    white-space: nowrap;
}
.ch-name {
    margin-top: 4px;
}
.ch-add {
    width: 19px;
    height: 20px;
    line-height: 20px;
    text-align: center;
    background: #533360;
    color: #dddddd;
    border-radius: 2px;
    font-size: 14px;
}
.selected .ch-name {
    flex: 1;
    height: 25px;
    margin-top: 0;
    line-height: 29px;
    padding-right: 5px;
    background: #cfcfcf;
    color: #333;
}
.parent-label {
    margin-top: auto;
    padding-right: 3px;
    font-weight: bold;
    font-size: 9.5px;
    line-height: 14px;
    display: flex;
    align-items: center;
    gap: 1px;
    color: #e0e0e0;
}
.info {
    width: 10px;
    height: 10px;
    line-height: 10px;
    text-align: center;
    border-radius: 50%;
    background: #c9c9c9;
    color: #333;
    font-size: 8px;
}
.panel-foot {
    display: flex;
    align-items: center;
    height: 22px;
    margin: 6px 3px 3px 0;
    color: #333;
}
.parent-select {
    width: 80px;
    height: 21px;
    background: #cdcdcd;
    border-radius: 3px;
    display: flex;
    align-items: center;
    justify-content: center;
    gap: 5px;
}
.arrows {
    margin-right: 104px;
    width: 36px;
    height: 21px;
    display: flex;
    background: #cdcdcd;
    border-radius: 3px;
}
.arrows span {
    flex: 1;
    display: flex;
    align-items: center;
    justify-content: center;
    border-left: 1px solid #a9a9a9;
}
.arrows span:last-child {
    border-left: none;
}
.copy-btn {
    width: 23px;
    height: 21px;
    margin-right: 5px;
    background: #cdcdcd;
    border-radius: 3px;
    display: flex;
    align-items: center;
    justify-content: center;
}
.copy-btn svg {
    width: 14px;
    height: 14px;
}
.trash-btn {
    width: 20px;
    height: 21px;
    margin-right: 4px;
    background: #8e2525;
    border-radius: 3px;
    display: flex;
    align-items: center;
    justify-content: center;
}
.trash-btn svg {
    width: 10px;
    height: 12px;
}

/* taskbar */
.taskbar {
    height: 40px;
    background: #0c131b;
    display: flex;
    color: #fff;
}
.tb-left {
    display: flex;
}
.tb-item {
    width: 48px;
    height: 40px;
    box-sizing: border-box;
    display: flex;
    align-items: center;
    justify-content: center;
}
.tb-item svg {
    width: 17px;
    height: 17px;
}
.tb-item.tv {
    margin-right: 3px;
}
.tb-item.app {
    width: 49px;
}
.tb-item.app svg {
    width: 24px;
    height: 24px;
}
.tb-item.on {
    border-bottom: 2px solid #76b9ed;
    padding-top: 2px;
    border-left: 4px solid transparent;
    border-right: 4px solid transparent;
    background-clip: padding-box;
}
.tb-item.active {
    background: #3a3d42;
    border-left: none;
    border-right: none;
}
.tray {
    margin-left: auto;
    display: flex;
    align-items: center;
    position: relative;
    width: 310px;
}
.tray svg {
    flex: none;
}
.t-people {
    width: 16px;
    height: 16px;
    margin-left: 5px;
}
.t-chev {
    width: 12px;
    height: 8px;
    margin-left: 24px;
}
.t-cloud {
    width: 16px;
    height: 14px;
    margin-left: 7px;
}
.t-power {
    width: 16px;
    height: 14px;
    margin-left: 8px;
}
.t-wifi {
    width: 15px;
    height: 14px;
    margin-left: 8px;
}
.t-vol {
    width: 16px;
    height: 14px;
    margin-left: 10px;
}
.t-lang {
    margin-left: 20px;
    font-size: 13px;
}
.clock {
    margin-left: 22px;
    width: 50px;
    text-align: center;
    font-family: "Open Sans", sans-serif;
    font-size: 11.5px;
    line-height: 18px;
}
.t-note {
    position: relative;
    margin-left: 18px;
}
.t-note svg {
    width: 16px;
    height: 14px;
}
.t-note b {
    position: absolute;
    left: 9px;
    top: 6px;
    width: 14px;
    height: 14px;
    border-radius: 50%;
    background: #444;
    border: 1px solid #999;
    box-sizing: border-box;
    font-size: 10px;
    line-height: 12px;
    text-align: center;
}

/* dialog */
.modal {
    position: absolute;
    left: 234px;
    top: 79px;
    width: 898px;
    height: 601px;
    display: flex;
    flex-direction: column;
    background: #ececec;
    border-radius: 6px;
    box-shadow: 0 4px 22px rgba(0,0,0,0.45);
}
.modal-head {
    position: relative;
    height: 76px;
    box-sizing: border-box;
    padding: 15px 15px 0;
    border-bottom: 1px solid #dcdcdc;
}
.modal-head h2 {
    margin: 0;
    font-size: 16px;
    font-weight: normal;
    line-height: 22px;
    color: #333;
}
.modal-head p {
    margin: 8px 0 0;
    font-size: 12.1px;
    line-height: 14px;
    color: #333;
}
.modal-close {
    position: absolute;
    left: 15px;
    top: 12px;
    font-family: "Liberation Sans", sans-serif;
    font-size: 24px;
    line-height: 26px;
    color: #c4c4c4;
}
.modal-body {
    height: 462px;
    box-sizing: border-box;
    padding: 0 30px;
}
.form-row {
    display: flex;
    gap: 30px;
    padding-top: 16px;
}
.field label {
    display: block;
    font-size: 13.5px;
    line-height: 18px;
    margin-bottom: 6px;
    color: #333;
}
.group-field {
    width: 549px;
}
.resp-field {
    width: 90px;
}
.text-input {
    height: 30px;
    box-sizing: border-box;
    line-height: 28px;
    padding: 0 12px;
    background: #fff;
    border: 1px solid #cfcfcf;
    border-radius: 4px;
    color: #555;
    font-size: 11.5px;
}
.select-input {
    display: flex;
    align-items: center;
    gap: 4px;
    white-space: nowrap;
}
.tabs {
    display: flex;
    gap: 2px;
    margin-top: 8px;
}
.tab {
    height: 27px;
    line-height: 27px;
    text-align: center;
    background: #dcdcdc;
    border-radius: 3px;
    color: #444;
    font-size: 11.6px;
}
.tab.active {
    background: #000;
    color: #fff;
    font-weight: bold;
    font-size: 10.5px;
}
.t1 {
    width: 64px;
    margin-left: 6px;
}
.t2 {
    width: 95px;
    padding-left: 6px;
}
.t3 {
    width: 74px;
}
.t4 {
    width: 93px;
}
.t5 {
    width: 66px;
}
.q-toolbar {
    display: flex;
    align-items: center;
    height: 23px;
    margin-top: 11px;
}
.q-label {
    width: 37px;
    font-size: 13px;
}
.badge {
    display: inline-block;
    width: 14px;
    height: 17px;
    line-height: 17px;
    text-align: center;
    background: #777;
    color: #fff;
    border-radius: 3px;
    font-weight: bold;
    font-size: 12px;
}
.q-plus {
    width: 24px;
    text-align: center;
    font-size: 12px;
    white-space: nowrap;
}
.q-btn {
    height: 23px;
    margin-left: 4px;
    box-sizing: border-box;
    line-height: 22px;
    text-align: center;
    background: #6d3d7b;
    color: #e8e8e8;
    border-radius: 2px;
    font-weight: bold;
    font-size: 10.3px;
    white-space: nowrap;
    overflow: hidden;
}
.q-btn.dark {
    background: #532d60;
}
.w54 {
    width: 54px;
}
.w156 {
    width: 156px;
}
.w170 {
    width: 170px;
}
.w69 {
    width: 69px;
}
.w84 {
    width: 84px;
}
.q-sep {
    width: 37px;
    height: 22px;
    box-sizing: border-box;
    line-height: 20px;
    text-align: center;
    background: #fff;
    border: 1px solid #ccc;
    border-radius: 3px;
    font-size: 11.3px;
}

.scroll-area {
    display: flex;
    height: 300px;
    margin-top: 9px;
    overflow: hidden;
}
.scroll-list {
    flex: 1;
    padding-top: 10px;
    min-width: 0;
}
.scrollbar {
    width: 9px;
    height: 300px;
    box-sizing: border-box;
    background: #f8f8f8;
    border: 1px solid #ddd;
    border-radius: 4px;
}
.thumb {
    height: 201px;
    margin: -1px;
    background: #888;
    border-radius: 4px;
}
.question {
    display: flex;
    padding-right: 9px;
    gap: 51px;
}
.q2 {
    margin-top: 17px;
}
.q-main {
    width: 701px;
}
.q-input {
    display: flex;
    height: 30px;
    box-sizing: border-box;
    background: #fff;
    border: 1px solid #d4d4d4;
    border-radius: 4px;
    color: #aaa;
}
.q-input.tall {
    height: 70px;
}
.q-num {
    width: 32px;
    padding-top: 5px;
    text-align: center;
    background: #ececec;
    border-left: 1px solid #d4d4d4;
    color: #4a5a78;
    font-size: 13px;
    line-height: 18px;
}
.q-text {
    flex: 1;
    padding: 6px 9px 0 0;
    line-height: 16px;
    font-size: 11.9px;
}
.q-type {
    width: 50px;
    box-sizing: border-box;
    display: flex;
    align-items: center;
    justify-content: center;
    gap: 5px;
    border-right: 1px solid #d4d4d4;
    color: #444;
}
.q-extra {
    display: flex;
    align-items: flex-start;
    gap: 4px;
    height: 24px;
    margin-top: 3px;
    padding-right: 25px;
}
.add-btn {
    height: 22px;
    margin-top: 2px;
    box-sizing: border-box;
    display: flex;
    align-items: center;
    justify-content: center;
    gap: 3px;
    background: #fff;
    border: 1px solid #d4d4d4;
    border-radius: 3px;
    color: #444;
    font-size: 11px;
    white-space: nowrap;
}
.add-btn svg {
    width: 13px;
    height: 12px;
    color: #333;
    flex: none;
}
.a1 {
    width: 83px;
}
.a2 {
    width: 118px;
}
.a3 {
    width: 84px;
}
.qm {
    display: inline-block;
    flex: none;
    width: 11px;
    height: 11px;
    line-height: 11px;
    text-align: center;
    border-radius: 50%;
    background: #333;
    color: #fff;
    font-weight: bold;
    font-size: 9px;
}
.score-label {
    width: 76px;
    margin: 3px 13px 0 0;
    font-size: 12px;
    line-height: 16px;
    white-space: nowrap;
}
.score {
    width: 45px;
    height: 23px;
    box-sizing: border-box;
    line-height: 21px;
    padding-right: 11px;
    background: #fff;
    border: 1px solid #d4d4d4;
    border-radius: 3px;
    font-size: 12px;
    color: #444;
}
.row-ctrl {
    display: flex;
    width: 56px;
    height: 22px;
    background: #fff;
    border: 1px solid #d8d8d8;
    border-radius: 3px;
    box-sizing: border-box;
    overflow: hidden;
}
.row-ctrl > span {
    flex: 1;
    display: flex;
    align-items: center;
    justify-content: center;
    border-left: 1px solid #d8d8d8;
    color: #333;
}
.row-ctrl .del {
    flex: none;
    width: 21px;
    margin: -1px 0 -1px -1px;
    background: #a32525;
    color: #fff;
    border-left: none;
}
.del svg {
    width: 11px;
    height: 11px;
}
.row-ctrl.wide {
    width: 78px;
    margin-right: 15px;
}
.choices-head {
    display: flex;
    align-items: center;
    gap: 4px;
    height: 18px;
    margin: 7px 19px 5px 0;
    font-size: 12.3px;
}
.choices-head .badge {
    width: 22px;
}
.choice {
    display: flex;
    padding-right: 5px;
    height: 29px;
    margin-bottom: 1px;
}
.choice-box {
    width: 520px;
    display: flex;
    box-sizing: border-box;
    border-radius: 5px;
    overflow: hidden;
    border: 1px solid #dedede;
    border-left-color: #ececec;
}
.choice-input {
    flex: 1;
    background: #fff;
    border-left: 2px solid #d4d4d4;
}
.radio {
    width: 12px;
    height: 12px;
    margin: 8px 12px 0 12px;
    box-sizing: border-box;
    background: #fff;
    border: 1px solid #777;
    border-radius: 50%;
}
.radio.on {
    border: 1px solid #1275e6;
    background: radial-gradient(circle, #1275e6 0 4px, #fff 4.5px);
}
.modal-foot {
    flex: 1;
    display: flex;
    justify-content: flex-end;
    align-items: flex-start;
    gap: 4px;
    padding: 16px 20px 0;
    border-top: 1px solid #dcdcdc;
}
.btn-create {
    width: 70px;
    height: 30px;
    line-height: 30px;
    text-align: center;
    background: #6d3d7b;
    color: #fff;
    border-radius: 3px;
    font-weight: bold;
    font-size: 10.8px;
}
.btn-cancel {
    width: 67px;
    height: 30px;
    box-sizing: border-box;
    line-height: 28px;
    text-align: center;
    background: #fff;
    border: 1px solid #ccc;
    border-radius: 3px;
    font-size: 10.3px;
}

/* annotations */
.mark {
    position: absolute;
    box-sizing: border-box;
    border: 2px solid #f0101a;
}
.m-tool {
    left: 71px;
    top: 267px;
    width: 77px;
    height: 58px;
    box-shadow: inset 0 0 0 1px #e8e8e8;
}
.m-group {
    left: 1028px;
    top: 193px;
    width: 77px;
    height: 33px;
}
.m-tab {
    left: 933px;
    top: 230px;
    width: 101px;
    height: 33px;
}
.m-types {
    left: 473px;
    top: 267px;
    width: 574px;
    height: 32px;
}
.m-add {
    left: 776px;
    top: 350px;
    width: 299px;
    height: 22px;
}

.activate {
    position: absolute;
    left: 1073px;
    top: 649px;
    font-family: "Open Sans", sans-serif;
    font-size: 19px;
    line-height: 25px;
    color: rgba(200,200,200,0.42);
    white-space: nowrap;
}
.activate .small {
    font-size: 13.7px;
    line-height: 22px;
}
```
